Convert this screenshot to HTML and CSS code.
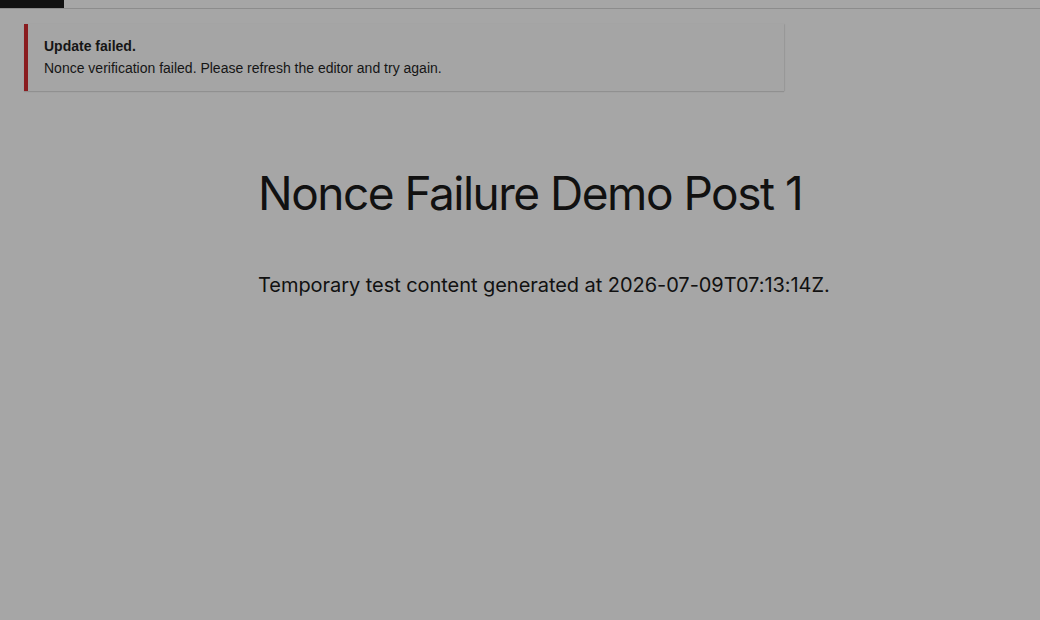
FILE: index.html
```html
<!DOCTYPE html>
<html lang="en">
<head>
<meta charset="utf-8">
<title>Nonce Failure Demo Post 1</title>
<link rel="stylesheet" href="styles.css">
</head>
<body>
<div class="topbar"><div class="topbar-block"></div></div>
<main class="page">
  <div class="notice">
    <strong class="notice-title">Update failed.</strong>
    <p class="notice-text">Nonce verification failed. Please refresh the editor and try again.</p>
  </div>
  <article class="post">
    <h1 class="post-title">Nonce Failure Demo Post 1</h1>
    <p class="post-body">Temporary test content generated at 2026-07-09T07:13:14Z.</p>
  </article>
</main>
</body>
</html>
```
FILE: styles.css
```css
html, body {
  margin: 0;
  padding: 0;
  background: #a6a6a6;
  height: 100%;
}
body {
  font-family: "Liberation Sans", Arial, sans-serif;
  color: #131313;
}
.topbar {
  height: 8px;
  border-bottom: 1px solid #8c8c8c;
  display: flex;
}
.topbar-block {
  width: 64px;
  background: #111111;
}
.page {
  padding: 15px 24px 0;
}
.notice {
  width: 724px;
  box-sizing: content-box;
  border-left: 4px solid #8a1c1f;
  background: #a5a5a5;
  padding: 12px 16px 13px;
  box-shadow: 0 1px 1px rgba(0, 0, 0, 0.12), 1px 0 1px rgba(0, 0, 0, 0.06);
}
.notice-title {
  display: block;
  font-size: 14px;
  line-height: 20px;
  margin-bottom: 2px;
  color: #151515;
}
.notice-text {
  margin: 0;
  font-size: 14px;
  line-height: 20px;
  color: #151515;
}
.post {
  padding-left: 234px;
  font-family: Inter, "Noto Sans", sans-serif;
  color: #111111;
}
.post-title {
  margin: 75px 0 0;
  font-size: 46px;
  font-weight: 400;
  line-height: 1.2;
  letter-spacing: -1.5px;
}
.post-body {
  margin: 50px 0 0;
  font-size: 20px;
  line-height: 1.4;
  letter-spacing: -0.05px;
}
```
